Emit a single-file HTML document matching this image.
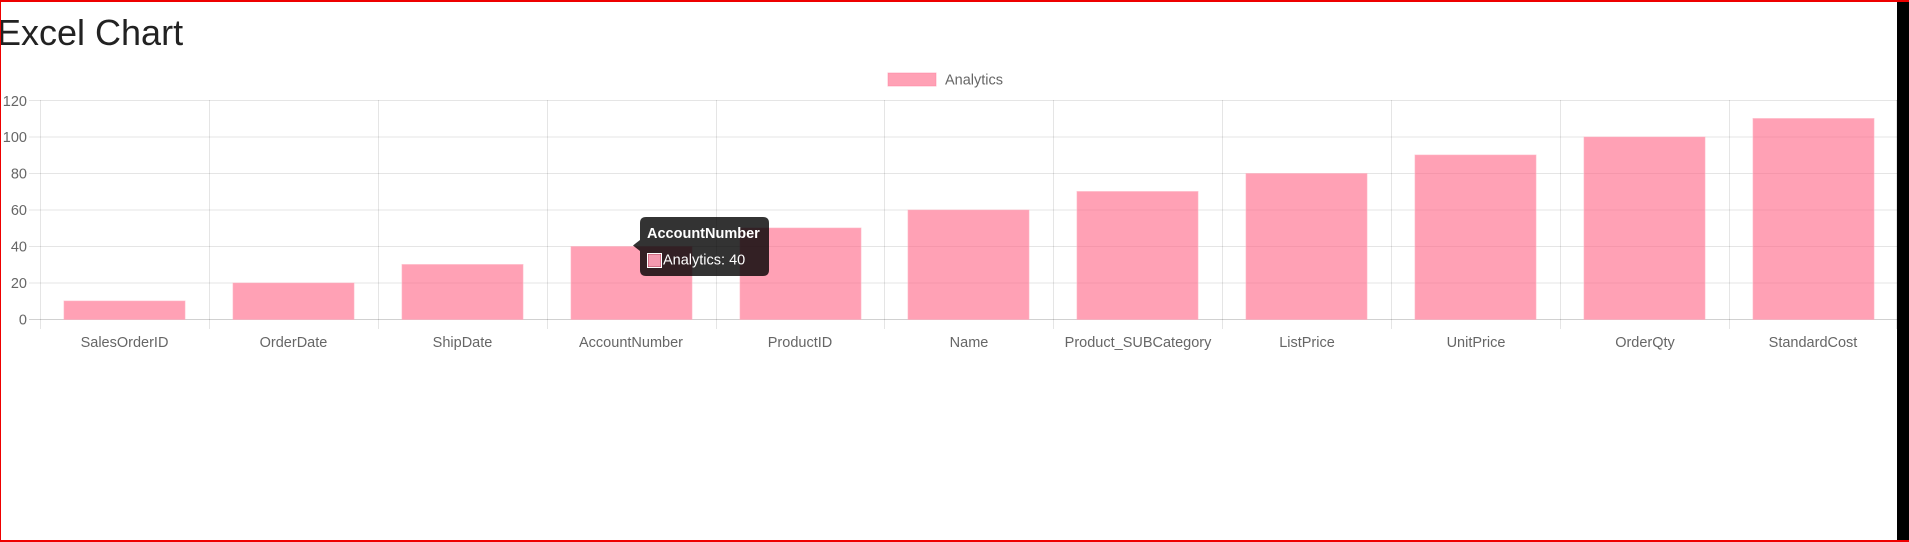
<!DOCTYPE html>
<html><head><meta charset="utf-8"><style>
html,body{margin:0;padding:0;background:#fff;width:1909px;height:542px;overflow:hidden;font-family:"Liberation Sans",sans-serif}
</style></head><body>
<svg width="1909" height="542" xmlns="http://www.w3.org/2000/svg" style="position:absolute;left:0;top:0;font-family:'Liberation Sans',sans-serif">
<rect x="0" y="0" width="1909" height="542" fill="#fff"/>
<text x="-3" y="45" font-size="36" fill="#222">Excel Chart</text>
<rect x="888" y="73" width="48" height="13" fill="rgba(255,99,132,0.6)" stroke="rgba(255,130,160,0.5)"/>
<text x="945" y="84.5" font-size="14.5" fill="#666">Analytics</text>
<g stroke="rgba(0,0,0,0.1)" stroke-width="1">
<line x1="29" y1="100.5" x2="1897" y2="100.5"/>
<line x1="29" y1="137" x2="1897" y2="137"/>
<line x1="29" y1="173.5" x2="1897" y2="173.5"/>
<line x1="29" y1="210" x2="1897" y2="210"/>
<line x1="29" y1="246.5" x2="1897" y2="246.5"/>
<line x1="29" y1="283" x2="1897" y2="283"/>
<line x1="40.5" y1="100" x2="40.5" y2="329"/>
<line x1="209.5" y1="100" x2="209.5" y2="329"/>
<line x1="378.5" y1="100" x2="378.5" y2="329"/>
<line x1="547.5" y1="100" x2="547.5" y2="329"/>
<line x1="716.5" y1="100" x2="716.5" y2="329"/>
<line x1="884.5" y1="100" x2="884.5" y2="329"/>
<line x1="1053.5" y1="100" x2="1053.5" y2="329"/>
<line x1="1222.5" y1="100" x2="1222.5" y2="329"/>
<line x1="1391.5" y1="100" x2="1391.5" y2="329"/>
<line x1="1560.5" y1="100" x2="1560.5" y2="329"/>
<line x1="1729.5" y1="100" x2="1729.5" y2="329"/>
<line x1="1896.5" y1="100" x2="1896.5" y2="329"/>
</g>
<line x1="29" y1="319.5" x2="1897" y2="319.5" stroke="rgba(0,0,0,0.18)"/>
<g fill="rgba(255,99,132,0.6)" stroke="rgba(255,180,195,0.6)" stroke-width="1">
<rect x="64" y="301" width="121" height="18.5"/>
<rect x="233" y="283" width="121" height="36.5"/>
<rect x="402" y="264.5" width="121" height="55"/>
<rect x="571" y="246.5" width="121" height="73"/>
<rect x="740" y="228" width="121" height="91.5"/>
<rect x="908" y="210" width="121" height="109.5"/>
<rect x="1077" y="191.5" width="121" height="128"/>
<rect x="1246" y="173.5" width="121" height="146"/>
<rect x="1415" y="155" width="121" height="164.5"/>
<rect x="1584" y="137" width="121" height="182.5"/>
<rect x="1753" y="118.5" width="121" height="201"/>
</g>
<g font-size="14.5" fill="#666" text-anchor="end">
<text x="27" y="106">120</text><text x="27" y="142">100</text><text x="27" y="178.5">80</text>
<text x="27" y="215">60</text><text x="27" y="251.5">40</text><text x="27" y="288">20</text><text x="27" y="324.5">0</text>
</g>
<g font-size="14.5" fill="#666" text-anchor="middle">
<text x="124.5" y="347">SalesOrderID</text><text x="293.5" y="347">OrderDate</text><text x="462.5" y="347">ShipDate</text>
<text x="631" y="347">AccountNumber</text><text x="800" y="347">ProductID</text><text x="969" y="347">Name</text>
<text x="1138" y="347">Product_SUBCategory</text><text x="1307" y="347">ListPrice</text><text x="1476" y="347">UnitPrice</text>
<text x="1645" y="347">OrderQty</text><text x="1813" y="347">StandardCost</text>
</g>
<path d="M646 217 H763 Q769 217 769 223 V270 Q769 276 763 276 H646 Q640 276 640 270 V251 L633 245.5 L640 240 V223 Q640 217 646 217 Z" fill="rgba(0,0,0,0.8)"/>
<text x="647" y="238" font-size="14.5" font-weight="bold" fill="#fff">AccountNumber</text>
<rect x="647.5" y="253.5" width="14" height="14" fill="rgba(255,99,132,0.6)" stroke="#fff"/>
<rect x="648.5" y="254.5" width="12" height="12" fill="#f59ab0"/>
<text x="663" y="264.5" font-size="14.5" fill="#fff">Analytics: 40</text>
<rect x="1897" y="0" width="12" height="542" fill="#000"/>
<rect x="0" y="0" width="1909" height="2" fill="#e00"/>
<rect x="0" y="0" width="1" height="542" fill="#e00"/>
<rect x="0" y="540" width="1909" height="2" fill="#e00"/>
</svg>
</body></html>
